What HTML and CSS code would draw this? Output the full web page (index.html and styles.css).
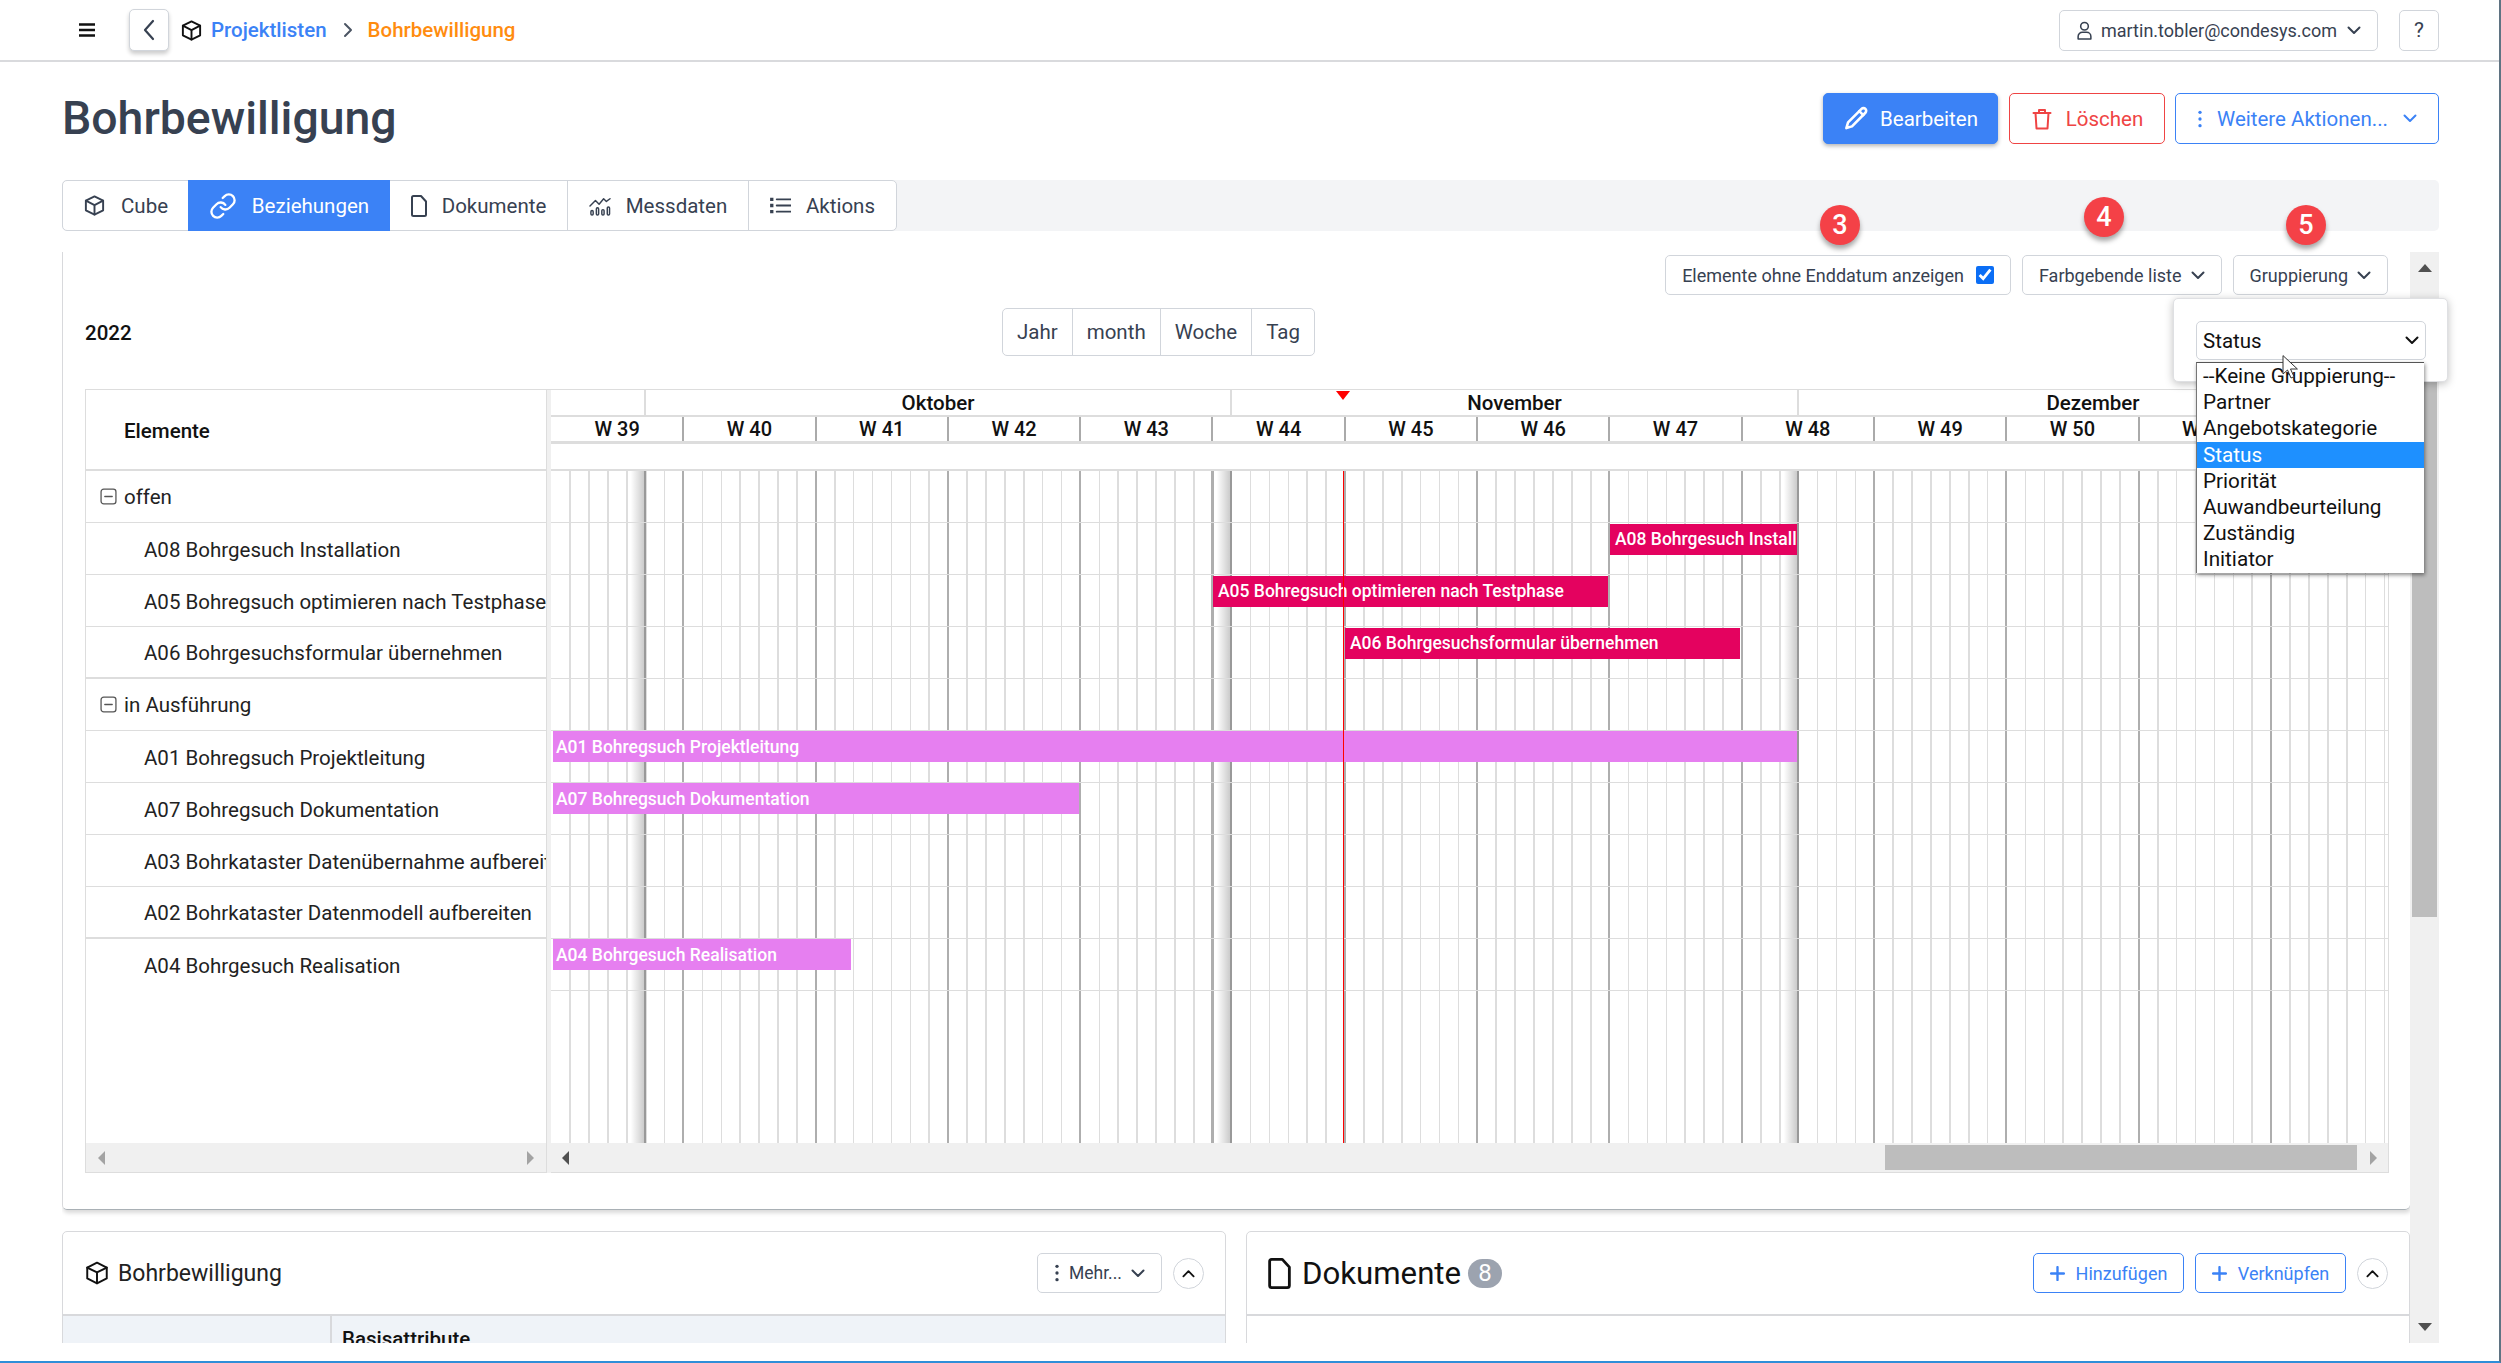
FILE: index.html
```html
<!DOCTYPE html>
<html lang="en">
<head>
    <meta charset="UTF-8">
    <title>Bohrbewilligung</title>
    <link rel="stylesheet" href="styles.css">
</head>
<body>
<div class="frame">
    <div class="app">
        <!-- Top bar -->
        <header class="topbar">
            <div class="crumbs">
                <svg class="icon-menu" viewBox="0 0 18 14"><path d="M1 1.5h16M1 7h16M1 12.5h16"/></svg>
                <button class="back-btn"><svg viewBox="0 0 14 24"><path d="M11 3 3 12l8 9"/></svg></button>
                <svg class="icon icon-cube" viewBox="0 0 24 24"><path d="M12 2.5 3 7v10l9 4.5 9-4.5V7z"/><path d="M3 7l9 4.5L21 7M12 11.5v10"/></svg>
                <a class="crumb-link">Projektlisten</a>
                <svg class="crumb-sep" viewBox="0 0 10 16"><path d="M2 2l6 6-6 6"/></svg>
                <span class="crumb-current">Bohrbewilligung</span>
            </div>
            <div class="user-area">
                <button class="btn user-btn">
                    <svg class="icon icon-user" viewBox="0 0 20 24"><circle cx="10" cy="7" r="4.5"/><path d="M2.5 22v-3a5 5 0 0 1 5-5h5a5 5 0 0 1 5 5v3z"/></svg>
                    martin.tobler@condesys.com
                    <svg class="chevron" viewBox="0 0 14 9"><path d="M1.5 1.5 7 7l5.500-5.500"/></svg>
                </button>
                <button class="btn help-btn">?</button>
            </div>
        </header>

        <main class="main">
            <div class="title-row">
                <h1>Bohrbewilligung</h1>
                <div class="actions">
                    <button class="btn btn-primary">
                        <svg class="icon icon-pencil" viewBox="0 0 24 24"><path d="M16.5 3.5a2.4 2.4 0 0 1 3.4 3.4L8 19l-5 1.5L4.5 15.5z"/><path d="M14.5 5.5l3.5 3.5"/></svg>
                        Bearbeiten
                    </button>
                    <button class="btn btn-danger">
                        <svg class="icon" viewBox="0 0 24 24"><path d="M3.5 6h17M9 6V3h6v3M5.5 6l1 15.5h11l1-15.5"/></svg>
                        Löschen
                    </button>
                    <button class="btn btn-outline">
                        <svg class="icon-dots" viewBox="0 0 6 24"><circle cx="3" cy="4" r="2"/><circle cx="3" cy="12" r="2"/><circle cx="3" cy="20" r="2"/></svg>
                        Weitere Aktionen...
                        <svg class="chevron" viewBox="0 0 14 9"><path d="M1.5 1.5 7 7l5.5-5.5"/></svg>
                    </button>
                </div>
            </div>

            <nav class="tabbar">
                <div class="tabs">
                    <a class="tab tab-cube">
                        <svg class="icon" viewBox="0 0 24 24"><path d="M12 2.5 3 7v10l9 4.5 9-4.5V7z"/><path d="M3 7l9 4.5L21 7M12 11.5v10"/></svg>
                        Cube
                    </a>
                    <a class="tab tab-active">
                        <svg class="icon icon-link" viewBox="0 0 24 24"><path d="M10 13a5 5 0 0 0 7.54.54l3-3a5 5 0 0 0-7.07-7.07l-1.72 1.71"/><path d="M14 11a5 5 0 0 0-7.54-.54l-3 3a5 5 0 0 0 7.07 7.07l1.71-1.71"/></svg>
                        Beziehungen
                    </a>
                    <a class="tab tab-docs">
                        <svg class="icon icon-doc" viewBox="0 0 16 22"><path d="M2.5 1H10l5 5.500v13a1.500 1.500 0 0 1-1.500 1.500h-11A1.500 1.500 0 0 1 1 19.500v-17A1.500 1.500 0 0 1 2.500 1z"/></svg>
                        Dokumente
                    </a>
                    <a class="tab tab-data">
                        <svg class="icon icon-chart" viewBox="0 0 24 22"><path d="M1 11l6-6 4 4 5-6 3 3 4-3"/><rect x="2" y="16" width="2.5" height="5" rx="1.2"/><rect x="8" y="13" width="2.5" height="8" rx="1.2"/><rect x="14" y="15" width="2.5" height="6" rx="1.2"/><rect x="20" y="12" width="2.5" height="9" rx="1.2"/></svg>
                        Messdaten
                    </a>
                    <a class="tab tab-actions">
                        <svg class="icon icon-list" viewBox="0 0 22 18"><path d="M7 2.5h15M7 9h15M7 15.5h15"/><path class="dot-line" d="M0 2.5h3.5M0 9h3.5M0 15.5h3.5"/></svg>
                        Aktions
                    </a>
                </div>
            </nav>

            <div class="content-row">
                <div class="content">
                    <section class="gantt-panel">
                        <div class="gantt-toolbar">
                            <label class="btn tool-btn">
                                Elemente ohne Enddatum anzeigen
                                <input type="checkbox" checked>
                            </label>
                            <button class="btn tool-btn">
                                Farbgebende liste
                                <svg class="chevron" viewBox="0 0 14 9"><path d="M1.5 1.5 7 7l5.5-5.5"/></svg>
                            </button>
                            <button class="btn tool-btn">
                                Gruppierung
                                <svg class="chevron" viewBox="0 0 14 9"><path d="M1.5 1.5 7 7l5.5-5.5"/></svg>
                            </button>
                        </div>

                        <div class="view-row">
                            <div class="year">2022</div>
                            <div class="view-group">
                                <button class="view-btn">Jahr</button>
                                <button class="view-btn">month</button>
                                <button class="view-btn">Woche</button>
                                <button class="view-btn">Tag</button>
                            </div>
                        </div>

                        <div class="gantt">
                            <!-- Left pane: element names -->
                            <div class="gantt-names">
                                <div class="names-head">Elemente</div>
                                <div class="names-body">
                                    <div class="name-row group"><svg class="toggle" viewBox="0 0 16 16"><rect x="1" y="1" width="14" height="14" rx="2.5"/><path d="M4.5 8h7"/></svg>offen</div>
                                    <div class="name-row child">A08 Bohrgesuch Installation</div>
                                    <div class="name-row child">A05 Bohregsuch optimieren nach Testphase</div>
                                    <div class="name-row child row-end">A06 Bohrgesuchsformular übernehmen</div>
                                    <div class="name-row group"><svg class="toggle" viewBox="0 0 16 16"><rect x="1" y="1" width="14" height="14" rx="2.5"/><path d="M4.5 8h7"/></svg>in Ausführung</div>
                                    <div class="name-row child">A01 Bohregsuch Projektleitung</div>
                                    <div class="name-row child">A07 Bohregsuch Dokumentation</div>
                                    <div class="name-row child">A03 Bohrkataster Datenübernahme aufbereiten</div>
                                    <div class="name-row child row-end">A02 Bohrkataster Datenmodell aufbereiten</div>
                                    <div class="name-row child last">A04 Bohrgesuch Realisation</div>
                                </div>
                                <div class="hscroll">
                                    <span class="arrow-left"></span>
                                    <span class="arrow-right"></span>
                                </div>
                            </div>

                            <div class="gantt-split"></div>

                            <!-- Right pane: timeline -->
                            <div class="gantt-chart">
                                <div class="months">
                                    <div class="month" style="width: 95px"></div>
                                    <div class="month" style="width: 586px">Oktober</div>
                                    <div class="month" style="width: 567px">November</div>
                                    <div class="month" style="width: 590px">Dezember</div>
                                    <span class="today-mark"></span>
                                </div>
                                <div class="weeks">
                                    <div class="week">W 39</div>
                                    <div class="week">W 40</div>
                                    <div class="week">W 41</div>
                                    <div class="week">W 42</div>
                                    <div class="week">W 43</div>
                                    <div class="week">W 44</div>
                                    <div class="week">W 45</div>
                                    <div class="week">W 46</div>
                                    <div class="week">W 47</div>
                                    <div class="week">W 48</div>
                                    <div class="week">W 49</div>
                                    <div class="week">W 50</div>
                                    <div class="week">W 51</div>
                                    <div class="week">W 52</div>
                                </div>
                                <div class="weeks-gap"></div>
                                <div class="chart-body">
                                    <div class="chart-row"></div>
                                    <div class="chart-row"><div class="bar bar-red" style="margin-left: 1059px; width: 187px">A08 Bohrgesuch Installation</div></div>
                                    <div class="chart-row"><div class="bar bar-red" style="margin-left: 662px; width: 395px">A05 Bohregsuch optimieren nach Testphase</div></div>
                                    <div class="chart-row row-end"><div class="bar bar-red" style="margin-left: 794px; width: 395px">A06 Bohrgesuchsformular übernehmen</div></div>
                                    <div class="chart-row"></div>
                                    <div class="chart-row"><div class="bar bar-pink" style="margin-left: 2px; width: 1244px">A01 Bohregsuch Projektleitung</div></div>
                                    <div class="chart-row"><div class="bar bar-pink" style="margin-left: 2px; width: 526px">A07 Bohregsuch Dokumentation</div></div>
                                    <div class="chart-row"></div>
                                    <div class="chart-row row-end"></div>
                                    <div class="chart-row last"><div class="bar bar-pink" style="margin-left: 2px; width: 298px">A04 Bohrgesuch Realisation</div></div>
                                    <span class="today-line"></span>
                                </div>
                                <div class="hscroll chart-scroll">
                                    <span class="arrow-left dark"></span>
                                    <span class="hscroll-thumb"></span>
                                    <span class="arrow-right"></span>
                                </div>
                            </div>
                        </div>
                    </section>

                    <div class="cards">
                        <section class="card">
                            <div class="card-head">
                                <svg class="icon icon-cube" viewBox="0 0 24 24"><path d="M12 2.5 3 7v10l9 4.5 9-4.5V7z"/><path d="M3 7l9 4.5L21 7M12 11.5v10"/></svg>
                                <span class="card-title">Bohrbewilligung</span>
                                <button class="btn more-btn">
                                    <svg class="icon-dots" viewBox="0 0 6 24"><circle cx="3" cy="4" r="2"/><circle cx="3" cy="12" r="2"/><circle cx="3" cy="20" r="2"/></svg>
                                    Mehr...
                                    <svg class="chevron" viewBox="0 0 14 9"><path d="M1.5 1.5 7 7l5.5-5.5"/></svg>
                                </button>
                                <button class="collapse-btn"><svg viewBox="0 0 14 9"><path d="M1.5 7.5 7 2l5.5 5.5"/></svg></button>
                            </div>
                            <div class="attr-table">
                                <div class="attr-side"></div>
                                <div class="attr-main">Basisattribute</div>
                            </div>
                        </section>
                        <section class="card">
                            <div class="card-head">
                                <svg class="icon icon-doc-big" viewBox="0 0 16 22"><path d="M2.5 1H10l5 5.5v13a1.5 1.5 0 0 1-1.5 1.5h-11A1.5 1.5 0 0 1 1 19.5v-17A1.5 1.5 0 0 1 2.5 1z"/></svg>
                                <span class="card-title big">Dokumente</span>
                                <span class="count">8</span>
                                <span class="head-fill"></span>
                                <button class="btn add-btn"><svg class="plus" viewBox="0 0 14 14"><path d="M7 1v12M1 7h12"/></svg>Hinzufügen</button>
                                <button class="btn add-btn"><svg class="plus" viewBox="0 0 14 14"><path d="M7 1v12M1 7h12"/></svg>Verknüpfen</button>
                                <button class="collapse-btn"><svg viewBox="0 0 14 9"><path d="M1.5 7.5 7 2l5.5 5.5"/></svg></button>
                            </div>
                        </section>
                    </div>
                </div>

                <div class="vscroll">
                    <span class="arrow-up"></span>
                    <span class="vscroll-thumb"></span>
                    <span class="arrow-down"></span>
                </div>
            </div>
        </main>

        <!-- Callouts and the open dropdown -->
        <span class="callout callout-3">3</span>
        <span class="callout callout-4">4</span>
        <span class="callout callout-5">5</span>

        <div class="group-menu">
            <div class="select-box">
                Status
                <svg class="chevron" viewBox="0 0 14 9"><path d="M1.5 1.5 7 7l5.5-5.5"/></svg>
            </div>
            <ul class="select-list">
                <li>--Keine Gruppierung--</li>
                <li>Partner</li>
                <li>Angebotskategorie</li>
                <li class="selected">Status</li>
                <li>Priorität</li>
                <li>Auwandbeurteilung</li>
                <li>Zuständig</li>
                <li>Initiator</li>
            </ul>
        </div>

        <svg class="cursor" viewBox="0 0 18 25"><path d="M1 1v18l4.5-4 3.5 8 3-1.3-3.5-7.7H15z"/></svg>
    </div>
</div>
</body>
</html>
```

FILE: styles.css
```css
* {
    box-sizing: border-box;
}

html, body {
    margin: 0;
    padding: 0;
    background-color: white;
}

body {
    font-family: "Roboto", "Liberation Sans", sans-serif;
    color: #374151;
    overflow: hidden;
}

button {
    font-family: inherit;
}

svg {
    display: block;
    flex: none;
    fill: none;
    stroke: currentColor;
    stroke-width: 2;
    stroke-linecap: round;
    stroke-linejoin: round;
}

.frame {
    height: 1363px;
    border-right: 2px solid #5f7382;
    border-bottom: 2px solid #2f8ed8;
}

.app {
    position: relative;
    height: 1343px;
    overflow: hidden;
}

/* Top bar */
.topbar {
    display: flex;
    justify-content: space-between;
    align-items: center;
    height: 62px;
    padding: 0 60px 0 78px;
    border-bottom: 2px solid #d9dadd;
}

.crumbs {
    display: flex;
    align-items: center;
    font-size: 20.5px;
    font-weight: 500;
}

.icon-menu {
    width: 18px;
    height: 14px;
    color: #111;
    stroke-linecap: butt;
    stroke-width: 2.5;
}

.back-btn {
    display: flex;
    align-items: center;
    justify-content: center;
    width: 40px;
    height: 42px;
    margin: 0 11px 0 33px;
    padding: 0;
    color: #374151;
    background-color: white;
    border: 1px solid #d1d5db;
    border-radius: 5px;
    box-shadow: 0 3px 4px rgba(0, 0, 0, 0.2);
}

.back-btn svg {
    width: 14px;
    height: 24px;
    stroke-width: 2.2;
}

.icon {
    width: 24px;
    height: 24px;
}

.icon-cube {
    width: 23px;
    height: 23px;
    color: #111;
}

.crumb-link {
    margin-left: 8px;
    color: #3b82f6;
}

.crumb-sep {
    width: 10px;
    height: 16px;
    margin: 0 15px 0 16px;
    color: #4b5563;
}

.crumb-current {
    color: #ff8c0f;
}

.user-area {
    display: flex;
    gap: 21px;
}

.btn {
    display: flex;
    align-items: center;
    background-color: white;
    border: 1px solid #d1d5db;
    border-radius: 5px;
    color: #374151;
    font-family: inherit;
}

.user-btn {
    height: 41px;
    width: 319px;
    padding: 0 16px;
    font-size: 18px;
    gap: 8px;
}

.user-btn .chevron {
    margin-left: 2px;
}

.icon-user {
    width: 17px;
    height: 21px;
    stroke-width: 1.8;
}

.chevron {
    width: 14px;
    height: 9px;
    stroke-width: 2;
}

.help-btn {
    justify-content: center;
    width: 40px;
    height: 41px;
    padding: 0;
    font-size: 21px;
}

/* Title row */
.main {
    padding: 0 60px 0 62px;
}

.title-row {
    display: flex;
    justify-content: space-between;
    align-items: center;
    height: 51px;
    margin-top: 31px;
}

h1 {
    margin: -2px 0 0;
    font-size: 46.4px;
    font-weight: 500;
    color: #374151;
}

.actions {
    display: flex;
    gap: 10.5px;
}

.actions .btn {
    height: 51px;
    justify-content: center;
    font-size: 20.5px;
    gap: 12px;
}

.btn-primary {
    width: 175px;
    color: white;
    background-color: #3b82f6;
    border-color: #3b82f6;
    box-shadow: 0 2px 4px rgba(0, 0, 0, 0.3);
}

.actions .btn-primary {
    gap: 10px;
}

.icon-pencil {
    width: 27px;
    height: 27px;
    stroke-width: 2.3;
}

.btn-danger {
    width: 156px;
    color: #ef4444;
    border-color: #ef4444;
}

.btn-outline {
    width: 264px;
    color: #3b82f6;
    border-color: #3b82f6;
}

.actions .btn-outline {
    gap: 14px;
}

.btn-outline .chevron {
    margin-left: 1px;
}

.icon-dots {
    width: 6px;
    height: 20px;
    fill: currentColor;
    stroke: none;
}

/* Tabs */
.tabbar {
    height: 51px;
    margin-top: 36px;
    background-color: #f3f4f6;
    border-radius: 5px;
}

.tabs {
    display: inline-flex;
    height: 51px;
    background-color: white;
    border: 1px solid #d1d5db;
    border-radius: 5px;
}

.tab {
    display: flex;
    align-items: center;
    justify-content: center;
    gap: 15px;
    font-size: 20.5px;
    border-left: 1px solid #d1d5db;
}

.tab .icon {
    width: 23px;
    height: 23px;
}

.tab-cube {
    width: 125px;
    border-left: none;
}

.tab-active {
    width: 202px;
    margin: -1px 0;
    color: white;
    background-color: #3b82f6;
    border-left: none;
}

.tab .icon-link {
    width: 28px;
    height: 28px;
}

.tab-docs {
    width: 177px;
    border-left: none;
}

.tab .icon-doc {
    width: 16px;
    height: 22px;
}

.tab-data {
    width: 181px;
}

.tab .icon-chart {
    width: 22px;
    height: 20px;
    stroke-width: 1.6;
}

.tab-actions {
    width: 148px;
}

.tab .icon-list {
    width: 21px;
    height: 17px;
}

.icon-list .dot-line {
    stroke-linecap: butt;
    stroke-width: 3.5;
}

/* Panel around the chart */
.content-row {
    display: flex;
    height: 1091px;
    margin-top: 21px;
    overflow: hidden;
}

.content {
    flex: 1;
    min-width: 0;
}

.gantt-panel {
    height: 958px;
    padding: 3px 21px 0 22px;
    border-left: 1px solid #d8d9dc;
    border-bottom: 1px solid #a9b0b5;
    border-radius: 0 0 5px 5px;
    box-shadow: 1px 3px 4px rgba(0, 0, 0, 0.15);
}

.gantt-toolbar {
    display: flex;
    justify-content: flex-end;
    gap: 11px;
    padding-right: 1px;
}

.tool-btn {
    height: 40px;
    padding: 0 16px;
    font-size: 18px;
    gap: 9px;
}

.tool-btn input {
    width: 18px;
    height: 18px;
    margin: 0 0 0 3px;
    accent-color: #0b6ef5;
}

.view-row {
    display: flex;
    align-items: center;
    height: 48px;
    margin-top: 13px;
}

.year {
    width: 917px;
    padding-top: 2px;
    font-size: 20.5px;
    font-weight: 500;
    color: #111;
}

.view-group {
    display: flex;
    height: 48px;
    border: 1px solid #d1d5db;
    border-radius: 5px;
}

.view-btn {
    padding: 0 14px;
    color: #374151;
    font-size: 20.5px;
    background: none;
    border: none;
    border-left: 1px solid #d1d5db;
}

.view-btn:first-child {
    border-left: none;
}

/* Gantt chart */
.gantt {
    display: flex;
    height: 784px;
    margin-top: 33px;
    border-top: 1px solid #ddd;
    border-left: 1px solid #ddd;
    border-right: 1px solid #ddd;
    color: #222;
}

.gantt-names {
    display: flex;
    flex-direction: column;
    width: 460px;
}

.names-head {
    display: flex;
    align-items: center;
    height: 81px;
    padding: 2px 0 0 38px;
    font-size: 20.5px;
    font-weight: 500;
    color: #111;
    border-bottom: 2px solid #ddd;
}

.names-body {
    flex: 1;
    overflow: hidden;
}

.name-row {
    display: flex;
    align-items: center;
    height: 52px;
    font-size: 20.5px;
    white-space: nowrap;
    border-bottom: 1px solid #ddd;
}

.group {
    padding-left: 14px;
    gap: 7px;
}

.child {
    padding: 2px 0 0 58px;
}

.toggle {
    width: 17px;
    height: 17px;
    color: #555;
    stroke-width: 1.2;
}

.row-end {
    border-bottom-width: 2px;
}

.last {
    border-bottom: none;
}

.gantt-split {
    width: 5px;
    background-color: #f0f0f0;
    border-left: 1px solid #ddd;
}

.gantt-chart {
    display: flex;
    flex-direction: column;
    flex: 1;
    min-width: 0;
    position: relative;
    overflow: hidden;
}

.months {
    position: relative;
    display: flex;
    height: 27px;
    border-bottom: 2px solid #ddd;
}

.month {
    flex: none;
    font-size: 20.5px;
    font-weight: 500;
    line-height: 27px;
    text-align: center;
    color: #111;
    border-right: 2px solid #ddd;
}

.today-mark {
    position: absolute;
    left: 785px;
    top: 1px;
    border-top: 9px solid #f00;
    border-left: 7px solid transparent;
    border-right: 7px solid transparent;
}

.weeks {
    display: flex;
    height: 27px;
    padding-left: 1px;
    border-bottom: 3px solid #ddd;
}

.week {
    flex: 0 0 132.3px;
    font-size: 20px;
    font-weight: 500;
    line-height: 24px;
    text-align: center;
    color: #111;
    border-right: 2px solid #aaa;
}

.weeks-gap {
    height: 27px;
    border-bottom: 2px solid #ddd;
}

.chart-body {
    position: relative;
    flex: 1;
    background-image:
        linear-gradient(90deg, rgba(0, 0, 0, 0) 15%, rgba(0, 0, 0, 0.2) 88%, #999 88%),
        linear-gradient(90deg, rgba(0, 0, 0, 0) 15%, rgba(0, 0, 0, 0.2) 88%, #999 88%),
        linear-gradient(90deg, rgba(0, 0, 0, 0) 15%, rgba(0, 0, 0, 0.2) 88%, #999 88%),
        repeating-linear-gradient(90deg, rgba(0, 0, 0, 0) 0 130.3px, #aeaeae 130.3px 132.3px),
        repeating-linear-gradient(90deg, rgba(0, 0, 0, 0) 0 17.3px, #ddd 17.3px 18.9px);
    background-size: 18px 100%, 18px 100%, 18px 100%, auto, auto;
    background-position: 77px 0, 663px 0, 1230px 0, 1px 0, 1px 0;
    background-repeat: no-repeat, no-repeat, no-repeat, repeat, repeat;
}

.chart-row {
    height: 52px;
    padding-top: 1px;
    border-bottom: 1px solid #ddd;
}

.bar {
    height: 31px;
    padding-left: 5px;
    overflow: hidden;
    color: white;
    font-size: 17.5px;
    font-weight: 500;
    line-height: 31px;
    white-space: nowrap;
}

.bar-red {
    background-color: #e4025f;
}

.bar-pink {
    margin-top: -1px;
    padding-left: 3px;
    line-height: 33px;
    background-color: #e67ff0;
}

.today-line {
    position: absolute;
    left: 792px;
    top: 0;
    bottom: 0;
    width: 1px;
    background-color: #f00;
}

.hscroll {
    position: relative;
    display: flex;
    align-items: center;
    justify-content: space-between;
    height: 30px;
    padding: 0 12px;
    background-color: #f0f0f0;
    border-bottom: 1px solid #ddd;
}

.chart-scroll {
    padding: 0 11px;
}

.hscroll-thumb {
    position: absolute;
    left: 1334px;
    top: 2px;
    width: 472px;
    height: 25px;
    background-color: #bdbdbd;
}

.arrow-left {
    border-top: 7px solid transparent;
    border-bottom: 7px solid transparent;
    border-right: 7px solid #a3a3a3;
}

.arrow-right {
    border-top: 7px solid transparent;
    border-bottom: 7px solid transparent;
    border-left: 7px solid #a3a3a3;
}

.arrow-left.dark {
    border-right-color: #505050;
}

.vscroll {
    position: relative;
    flex: 0 0 29px;
    background-color: #f0f0f0;
}

.vscroll-thumb {
    position: absolute;
    left: 2px;
    top: 48px;
    width: 25px;
    height: 617px;
    background-color: #bdbdbd;
}

.arrow-up {
    position: absolute;
    left: 8px;
    top: 12px;
    border-left: 7px solid transparent;
    border-right: 7px solid transparent;
    border-bottom: 8px solid #505050;
}

.arrow-down {
    position: absolute;
    left: 8px;
    bottom: 12px;
    border-left: 7px solid transparent;
    border-right: 7px solid transparent;
    border-top: 8px solid #505050;
}

/* Bottom cards */
.cards {
    display: flex;
    gap: 20px;
    margin-top: 21px;
}

.card {
    flex: 1;
    height: 200px;
    border: 1px solid #d8d9dc;
    border-radius: 5px 5px 0 0;
}

.card-head {
    display: flex;
    align-items: center;
    height: 84px;
    padding: 0 21px;
    color: #222;
    border-bottom: 2px solid #d8d9dc;
}

.card-head .icon-cube {
    width: 26px;
    height: 26px;
    stroke-width: 1.8;
}

.card-title {
    flex: 1;
    margin-left: 8px;
    font-size: 23px;
}

.card-title.big {
    flex: none;
    margin-left: 11px;
    font-size: 31.2px;
    color: #111;
}

.icon-doc-big {
    width: 23px;
    height: 31px;
    color: #111;
    stroke-width: 2;
}

.count {
    width: 34px;
    height: 29px;
    margin-left: 7px;
    color: white;
    font-size: 24px;
    line-height: 29px;
    text-align: center;
    background-color: #9ca3af;
    border-radius: 15px;
}

.head-fill {
    flex: 1;
}

.more-btn {
    width: 125px;
    height: 40px;
    justify-content: center;
    gap: 9px;
    font-size: 17.5px;
}

.collapse-btn {
    display: flex;
    align-items: center;
    justify-content: center;
    width: 31px;
    height: 31px;
    margin-left: 11px;
    padding: 0;
    color: #111;
    background-color: white;
    border: 1px solid #d1d5db;
    border-radius: 50%;
}

.collapse-btn svg {
    width: 13px;
    height: 9px;
}

.add-btn {
    width: 151px;
    height: 40px;
    justify-content: center;
    gap: 11px;
    margin-left: 11px;
    color: #3b82f6;
    font-size: 18px;
    border-color: #3b82f6;
}

.plus {
    width: 15px;
    height: 15px;
    stroke-width: 2.2;
}

.attr-table {
    display: flex;
    height: 114px;
    background-color: #eff3f8;
}

.attr-side {
    width: 269px;
    border-right: 2px solid #d8d9dc;
}

.attr-main {
    padding: 11px 0 0 10px;
    font-size: 20.5px;
    font-weight: 500;
    color: #111;
}

/* Overlays */
.callout {
    position: absolute;
    width: 40px;
    height: 40px;
    color: white;
    font-size: 27px;
    font-weight: 500;
    line-height: 40px;
    text-align: center;
    background-color: #f44147;
    border-radius: 50%;
    box-shadow: 0 4px 5px rgba(0, 0, 0, 0.35);
}

.callout-3 {
    left: 1820px;
    top: 205px;
}

.callout-4 {
    left: 2084px;
    top: 197px;
}

.callout-5 {
    left: 2286px;
    top: 205px;
}

.group-menu {
    position: absolute;
    left: 2173px;
    top: 298px;
    width: 275px;
    height: 84px;
    padding: 22px 0 0 22px;
    background-color: white;
    border: 1px solid #dfe0e3;
    border-radius: 5px;
    box-shadow: 0 2px 8px rgba(0, 0, 0, 0.25);
}

.select-box {
    display: flex;
    align-items: center;
    justify-content: space-between;
    width: 230px;
    height: 39px;
    padding: 0 6px;
    color: #111;
    font-size: 20.5px;
    border: 1px solid #d1d5db;
    border-radius: 5px;
}

.select-list {
    position: absolute;
    left: 22px;
    top: 63px;
    width: 228px;
    margin: 0;
    padding: 0;
    list-style: none;
    color: #111;
    font-size: 20.7px;
    background-color: white;
    border-top: 1px solid #555;
    border-left: 1px solid #777;
    box-shadow: 1px 2px 4px rgba(0, 0, 0, 0.45);
}

.select-list li {
    height: 26.2px;
    padding-left: 6px;
    line-height: 26px;
}

.select-list .selected {
    color: white;
    background-color: #1e90ff;
}

.cursor {
    position: absolute;
    left: 2282px;
    top: 355px;
    width: 18px;
    height: 25px;
    fill: white;
    stroke: #333;
    stroke-width: 1;
}
```
